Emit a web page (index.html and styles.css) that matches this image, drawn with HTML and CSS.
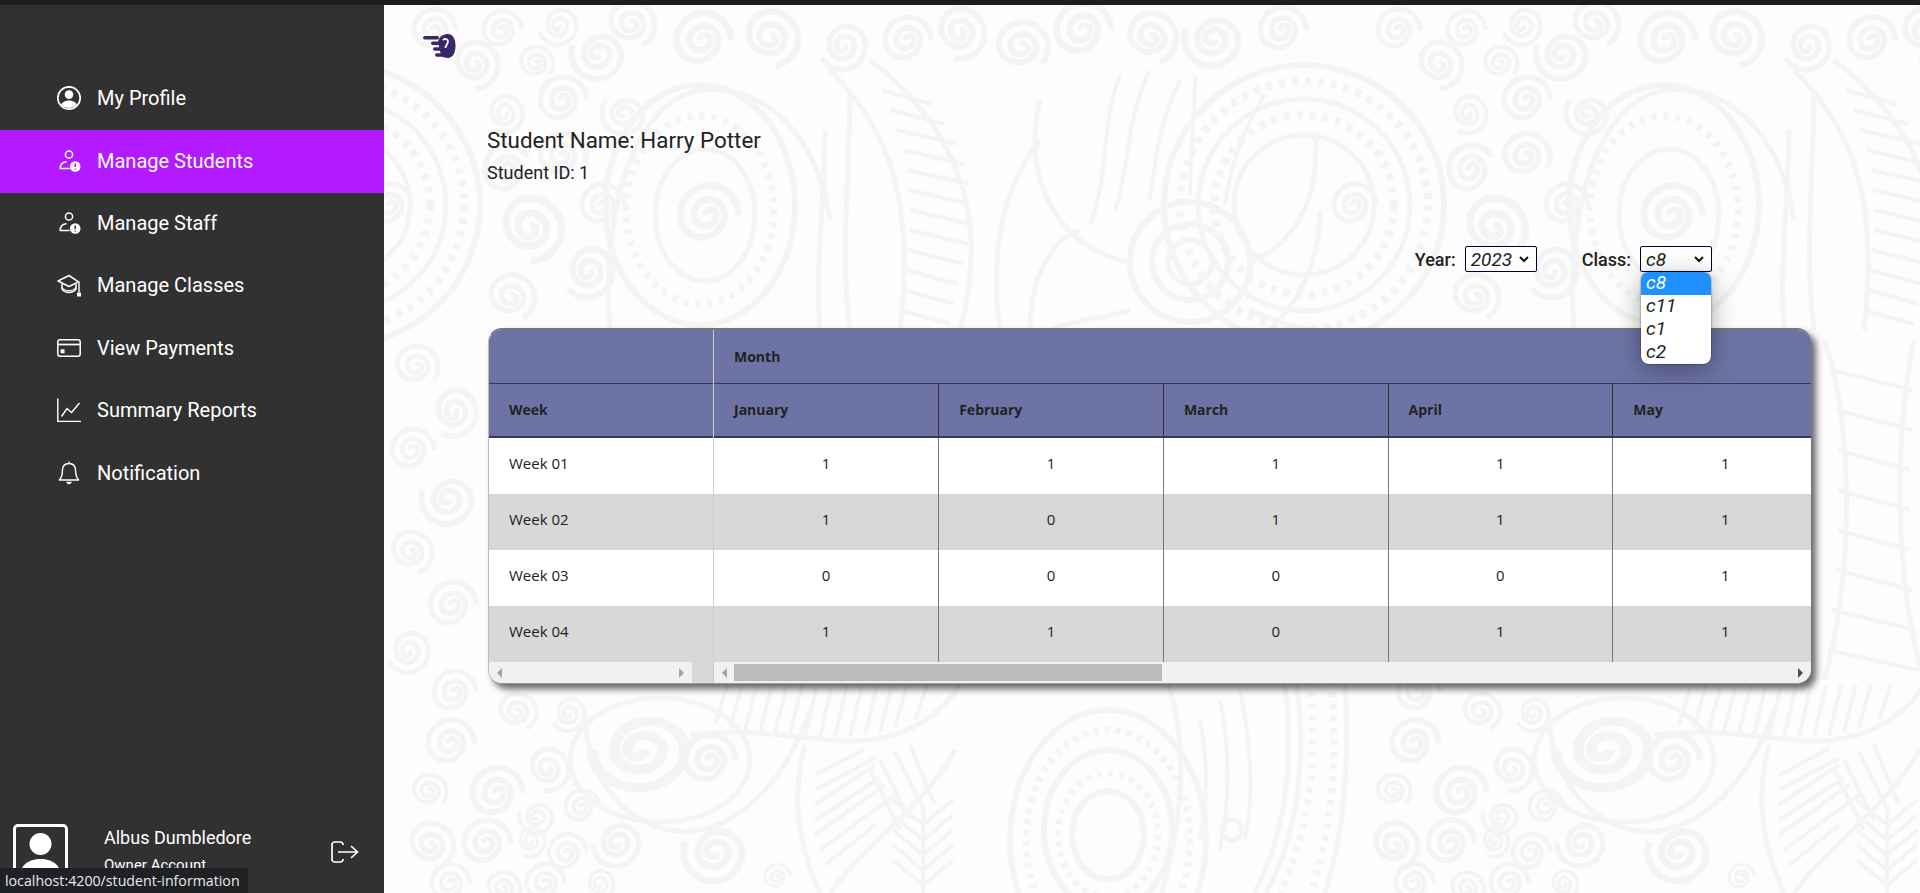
FILE: index.html
```html
<!DOCTYPE html>
<html lang="en">
<head>
    <meta charset="UTF-8">
    <meta name="viewport" content="width=device-width, initial-scale=1.0">
    <title>Student Information</title>
    <link rel="stylesheet" href="styles.css">
</head>
<body>
    <div class="top-strip"></div>

    <div class="app">
        <aside class="sidebar">
            <nav class="nav">
                <a class="nav-item" href="#">
                    <svg class="nav-icon" viewBox="0 0 24 24"><circle cx="12" cy="12" r="11.2" fill="none" stroke="#fff" stroke-width="1.7"/><circle cx="12" cy="8.6" r="4.3" fill="#fff"/><path d="M4 18.6c1.6-3 4.6-4.2 8-4.2s6.400 1.200 8 4.200a11 11 0 0 1-16 0z" fill="#fff"/></svg>
                    My Profile
                </a>
                <a class="nav-item active" href="#">
                    <svg class="nav-icon" viewBox="0 0 24 24"><circle cx="12" cy="5.500" r="3.600" fill="none" stroke="#fff" stroke-width="1.500"/><path d="M3.200 19.500c0-4 2.400-6.200 5.800-6.700M3.200 19.500h8.800" fill="none" stroke="#fff" stroke-width="1.500" stroke-linecap="round"/><circle cx="18.200" cy="17.500" r="5.300" fill="#fff"/><path d="M18.200 14.500v3.500M18.200 19.500v1" stroke="#b41aff" stroke-width="1.500"/></svg>
                    Manage Students
                </a>
                <a class="nav-item" href="#">
                    <svg class="nav-icon" viewBox="0 0 24 24"><circle cx="12" cy="5.500" r="3.600" fill="none" stroke="#fff" stroke-width="1.500"/><path d="M3.200 19.500c0-4 2.400-6.200 5.800-6.700M3.200 19.500h8.800" fill="none" stroke="#fff" stroke-width="1.500" stroke-linecap="round"/><circle cx="18.200" cy="17.500" r="5.300" fill="#fff"/><path d="M18.200 14.500v3.500M18.200 19.500v1" stroke="#313131" stroke-width="1.500"/></svg>
                    Manage Staff
                </a>
                <a class="nav-item" href="#">
                    <svg class="nav-icon" viewBox="0 0 24 24"><path d="M12 2.500 1 8l11 5.500L21.500 8.800z" fill="none" stroke="#fff" stroke-width="1.500" stroke-linejoin="round"/><path d="M5 11v5c2 2.600 4.500 3.500 7 3.500s5-.9 7-3.500v-5" fill="none" stroke="#fff" stroke-width="1.500"/><path d="M5 14.500c2 2.500 4.500 3.200 7 3.200s5-.7 7-3.200" fill="none" stroke="#fff" stroke-width="1.200"/><path d="M22 8.500v11" stroke="#fff" stroke-width="1.400"/><rect x="20" y="19.500" width="4" height="4" rx=".6" fill="#fff"/></svg>
                    Manage Classes
                </a>
                <a class="nav-item" href="#">
                    <svg class="nav-icon" viewBox="0 0 24 24"><rect x=".8" y="3.800" width="22.400" height="16.400" rx="2.200" fill="none" stroke="#fff" stroke-width="1.500"/><path d="M1 8.500h22" stroke="#fff" stroke-width="1.700"/><rect x="3.600" y="13.200" width="4" height="4" rx=".6" fill="#fff"/></svg>
                    View Payments
                </a>
                <a class="nav-item" href="#">
                    <svg class="nav-icon" viewBox="0 0 24 24"><path d="M.8 .5v23h23.200" fill="none" stroke="#fff" stroke-width="1.400"/><path d="M4.500 18.500 10 10.500l4.500 4 8-9.500" fill="none" stroke="#fff" stroke-width="1.400"/></svg>
                    Summary Reports
                </a>
                <a class="nav-item" href="#">
                    <svg class="nav-icon" viewBox="0 0 24 24"><path d="M12 2.500c-4.500 0-6.600 3.300-6.600 7.300 0 5-1.300 7.300-3.100 9.200h19.400c-1.800-1.900-3.100-4.200-3.100-9.200 0-4-2.100-7.300-6.600-7.300z" fill="none" stroke="#fff" stroke-width="1.400" stroke-linejoin="round"/><path d="M12 .5v2" stroke="#fff" stroke-width="1.400"/><path d="M9.200 20.700h5.600c-.3 1.500-1.400 2.500-2.800 2.500s-2.500-1-2.800-2.500z" fill="#fff"/></svg>
                    Notification
                </a>
            </nav>

            <div class="account">
                <div class="avatar">
                    <svg viewBox="0 0 48 60"><circle cx="24" cy="17" r="11" fill="#fff"/><path d="M3 52c0-14 9-20 21-20s21 6 21 20z" fill="#fff"/></svg>
                </div>
                <div class="account-text">
                    <div class="account-name">Albus Dumbledore</div>
                    <div class="account-role">Owner Account</div>
                </div>
                <svg class="logout" viewBox="0 0 28 22"><path d="M12 4V3.500A2.500 2.500 0 0 0 9.500 1H3.500A2.500 2.500 0 0 0 1 3.500v15A2.500 2.500 0 0 0 3.500 21h6a2.500 2.500 0 0 0 2.500-2.500V18" fill="none" stroke="#fff" stroke-width="1.700"/><path d="M7 11h19M20 5l6.500 6-6.500 6" fill="none" stroke="#fff" stroke-width="1.700"/></svg>
            </div>
        </aside>

        <main class="content">
            <!-- background paisley, drawn once and repeated one period (964px) to the right -->
            <svg class="paisley" width="1536" height="888" viewBox="384 5 1536 888">
                <defs>
                    <path id="curl" d="M0 0A4 4 0 0 1 8 0A8 8 0 0 1-8 0A11 11 0 0 1 14 0A16 16 0 0 1-18 0A21 21 0 0 1 24 0"/>
                    <g id="tile" fill="none" stroke="#f4f4f4" stroke-width="5">
                        <!-- top scroll field -->
                        <use href="#curl" transform="translate(432 30)"/>
                        <use href="#curl" transform="translate(500 30) scale(.9)"/>
                        <use href="#curl" transform="translate(475 62) rotate(90) scale(1.100)"/>
                        <use href="#curl" transform="translate(535 62) rotate(40) scale(.8)"/>
                        <use href="#curl" transform="translate(600 55) rotate(200) scale(1.200)"/>
                        <use href="#curl" transform="translate(560 100) scale(1.100)"/>
                        <use href="#curl" transform="translate(505 112) rotate(120) scale(.9)"/>
                        <use href="#curl" transform="translate(630 22) rotate(60) scale(1.100)"/>
                        <use href="#curl" transform="translate(560 25) rotate(160) scale(.9)"/>
                        <use href="#curl" transform="translate(700 40) scale(1.300)"/>
                        <use href="#curl" transform="translate(770 35) rotate(80) scale(1.300)"/>
                        <use href="#curl" transform="translate(845 45) rotate(150) scale(1.100)"/>
                        <use href="#curl" transform="translate(560 155) rotate(30) scale(1.100)"/>
                        <use href="#curl" transform="translate(625 115) rotate(220) scale(1)"/>
                        <use href="#curl" transform="translate(505 170) rotate(-30) scale(1.100)"/>
                        <use href="#curl" transform="translate(530 225) rotate(90) scale(1.500)"/>
                        <use href="#curl" transform="translate(600 205) scale(1)"/>
                        <use href="#curl" transform="translate(590 270) rotate(140) scale(1.200)"/>
                        <use href="#curl" transform="translate(510 295) rotate(60) scale(1.100)"/>
                        <use href="#curl" transform="translate(905 40) scale(1.100)"/>
                        <use href="#curl" transform="translate(960 30) rotate(100) scale(1.200)"/>
                        <use href="#curl" transform="translate(1020 45) rotate(40) scale(1.200)"/>
                        <use href="#curl" transform="translate(1080 30) scale(1.300)"/>
                        <use href="#curl" transform="translate(1150 35) rotate(70) scale(1.200)"/>
                        <use href="#curl" transform="translate(1215 40) rotate(200) scale(1.300)"/>
                        <use href="#curl" transform="translate(1280 30) scale(1.100)"/>
                        <!-- left round peacock -->
                        <circle cx="340" cy="205" r="140" stroke-width="6"/>
                        <circle cx="340" cy="205" r="124" stroke-width="8" stroke-dasharray="6 7"/>
                        <circle cx="340" cy="205" r="106" stroke-width="5"/>
                        <circle cx="340" cy="205" r="90" stroke-width="8" stroke-dasharray="6 7"/>
                        <circle cx="340" cy="205" r="70" stroke-width="5"/>
                        <use href="#curl" transform="translate(388 205) scale(1)"/>
                        <!-- centre teardrop -->
                        <ellipse cx="700" cy="205" rx="95" ry="120" stroke-width="6"/>
                        <ellipse cx="700" cy="210" rx="74" ry="94" stroke-width="7" stroke-dasharray="5 7"/>
                        <ellipse cx="705" cy="215" rx="50" ry="66"/>
                        <use href="#curl" transform="translate(705 215) scale(1.400)"/>
                        <path d="M610 330C600 200 640 80 720 90c60 5 100 60 110 130" stroke-width="5"/>
                        <!-- long feather at top -->
                        <path d="M830 70C890 130 915 200 900 330" stroke-width="5"/>
                        <path d="M870 60C960 130 990 220 960 330" stroke-width="5"/>
                        <path d="M882 90l50 14M890 110l55 14M897 130l60 14M903 150l60 14M907 170l62 14M909 190l60 14M910 210l60 14M910 230l58 14M908 250l55 14M906 270l52 14M904 290l50 14M900 310l50 14" stroke-width="4"/>
                        <path d="M850 90C850 160 840 260 850 330M825 130C825 200 815 260 820 330" stroke-width="5"/>
                        <!-- flower circle -->
                        <circle cx="1190" cy="262" r="60" stroke-width="6"/>
                        <circle cx="1190" cy="262" r="38" stroke-width="6"/>
                        <circle cx="1190" cy="262" r="22" stroke-width="5"/>
                        <path d="M1130 262C1060 250 1020 180 1040 100M1250 262c50-20 70-70 65-130" stroke-width="5"/>
                        <path d="M1090 225c20-50 10-100 30-150M1115 210c15-40 10-90 35-140M1150 200c5-40 10-80 30-120M1190 195c0-40 5-80 5-120M1225 205c5-40 20-80 40-110" stroke-width="4"/>
                        <path d="M1000 330c-10-70 0-140 40-190M1270 330c30-30 50-70 50-120M1030 330c0-50 20-90 50-100M1130 310c-30 10-60 10-80 20M1250 310c20 10 40 15 60 20" stroke-width="5"/>
                        <!-- left and right of the table -->
                        <use href="#curl" transform="translate(415 365) rotate(40) scale(1)"/>
                        <use href="#curl" transform="translate(455 410) rotate(120) scale(1.100)"/>
                        <use href="#curl" transform="translate(410 450) scale(1)"/>
                        <use href="#curl" transform="translate(450 500) rotate(200) scale(1.200)"/>
                        <use href="#curl" transform="translate(410 550) rotate(70) scale(1)"/>
                        <use href="#curl" transform="translate(450 605) scale(1.100)"/>
                        <use href="#curl" transform="translate(410 650) rotate(150) scale(1)"/>
                        <path d="M860 340c30 80 30 240 0 340M950 340c-20 100-20 240 10 340" stroke-width="5"/>
                        <path d="M868 370l80 20M872 410l76 20M874 450l72 20M874 490l72 20M874 530l72 20M872 570l76 20M868 610l84 20M864 650l90 20" stroke-width="4"/>

                        <!-- bottom scroll field -->
                        <use href="#curl" transform="translate(448 743) scale(1.100)"/>
                        <use href="#curl" transform="translate(516 710) rotate(60) scale(.9)"/>
                        <use href="#curl" transform="translate(570 713) rotate(150) scale(.8)"/>
                        <use href="#curl" transform="translate(452 692)"/>
                        <use href="#curl" transform="translate(548 767) rotate(100)"/>
                        <use href="#curl" transform="translate(494 793) scale(1.200)"/>
                        <use href="#curl" transform="translate(428 790) rotate(40) scale(.8)"/>
                        <use href="#curl" transform="translate(538 817) rotate(200) scale(.8)"/>
                        <use href="#curl" transform="translate(580 807) scale(.8)"/>
                        <use href="#curl" transform="translate(430 843) rotate(80) scale(1.100)"/>
                        <use href="#curl" transform="translate(484 843) scale(1.100)"/>
                        <use href="#curl" transform="translate(531 840) rotate(120) scale(.7)"/>
                        <use href="#curl" transform="translate(565 853) scale(.9)"/>
                        <use href="#curl" transform="translate(619 843) rotate(180) scale(1.100)"/>
                        <use href="#curl" transform="translate(448 883) scale(.9)"/>
                        <use href="#curl" transform="translate(502 887) rotate(60) scale(.8)"/>
                        <use href="#curl" transform="translate(543 883) scale(.9)"/>
                        <use href="#curl" transform="translate(600 883) rotate(120) scale(.7)"/>
                        <use href="#curl" transform="translate(717 853) rotate(200) scale(1.400)"/>
                        <use href="#curl" transform="translate(707 760) scale(1.200)"/>
                        <use href="#curl" transform="translate(776 877) scale(.6)"/>
                        <!-- big curl -->
                        <use href="#curl" transform="translate(645 750) rotate(180) scale(2.200 1.800)"/>
                        <ellipse cx="660" cy="760" rx="90" ry="62" stroke-width="5"/>
                        <path d="M585 720C590 800 650 840 700 830c50-10 90-60 110-120" stroke-width="5"/>
                        <!-- upper feather band -->
                        <path d="M690 735c70-10 130 10 180 5 40-5 70-25 90-55" stroke-width="5"/>
                        <path d="M715 725l12-40M730 728l12-43M745 730l12-45M760 731l12-46M775 732l12-47M790 735l12-50M805 736l12-50M820 737l12-52M835 737l12-52M850 736l12-50M865 735l12-50M880 732l12-47M895 727l12-42M915 720l12-35" stroke-width="4"/>
                        <!-- lower feathers -->
                        <path d="M805 745C790 800 800 850 820 893M955 750C930 800 860 850 830 893" stroke-width="5"/>
                        <path d="M815 775l50-26M815 790l60-32M815 805l60-40M815 820l65-42M815 835l70-50M820 850l75-55M825 865l50-40M870 770l30 60M880 760l30 60M895 752l30 60M910 745l25 60" stroke-width="4"/>
                        <path d="M923 805v88" stroke-width="4"/>
                        <path d="M923 825l-30-25M923 840l-30-25M923 855l-30-25M923 870l-30-25M923 885l-30-25M923 825l30-25M923 840l30-25M923 855l30-25M923 870l30-25M923 885l30-25" stroke-width="4"/>
                        <!-- lower peacock -->
                        <ellipse cx="1108" cy="835" rx="36" ry="44" stroke-width="6"/>
                        <ellipse cx="1108" cy="835" rx="50" ry="62" stroke-width="6" stroke-dasharray="5 6"/>
                        <ellipse cx="1108" cy="830" rx="64" ry="80" stroke-width="6"/>
                        <ellipse cx="1108" cy="840" rx="82" ry="110" stroke-width="7" stroke-dasharray="5 6"/>
                        <ellipse cx="1108" cy="840" rx="98" ry="130" stroke-width="6"/>
                        <path d="M1167 680c18 50 20 120-5 213M1284 680c10 70 5 150-30 213M1296 680c10 70 5 150-30 213" stroke-width="5"/>
                        <path d="M1310 680c8 70 0 150-30 213M1331 680c8 80 0 150-20 213" stroke-width="7" stroke-dasharray="5 7"/>
                        <path d="M1345 680c5 80 0 150-20 213" stroke-width="5"/>
                        <path d="M1220 700c10 50 10 100 0 150M1240 690c10 50 15 100 5 150M1200 720c8 40 8 80 0 120" stroke-width="4"/>
                        <circle cx="1232" cy="830" r="10"/>
                    </g>
                </defs>
                <use href="#tile"/>
                <use href="#tile" x="964"/>
            </svg>

            <div class="logo">
                <svg viewBox="0 0 34 26" width="34" height="26">
                    <path d="M16 9C17 3 22 1 26 1c5 0 7.500 5 7.500 12s-3 12-7.500 12c-3 0-6-1-7-3z" fill="#3a2766"/>
                    <rect x="1" y="3" width="16" height="3.600" rx="1.800" fill="#3a2766"/>
                    <rect x="9" y="8.500" width="9" height="3.400" rx="1.700" fill="#3a2766"/>
                    <rect x="11" y="14.200" width="10" height="3.600" rx="1.800" fill="#3a2766"/>
                    <rect x="13" y="20.200" width="10" height="3.600" rx="1.800" fill="#3a2766"/>
                    <path d="M21 7c2-2 5-1 5 1.500S23.500 12 23.500 15" fill="none" stroke="#fdfdfd" stroke-width="1.800"/>
                </svg>
            </div>

            <div class="student">
                <h1>Student Name: Harry Potter</h1>
                <p>Student ID: 1</p>
            </div>

            <div class="filters">
                <label class="filter year">Year:
                    <select><option>2023</option></select>
                </label>
                <div class="filter">
                    <label for="classSelect">Class:</label>
                    <div class="select-wrap">
                        <select id="classSelect" class="class-select">
                            <option>c8</option><option>c11</option><option>c1</option><option>c2</option>
                        </select>
                        <ul class="options">
                            <li class="selected">c8</li>
                            <li>c11</li>
                            <li>c1</li>
                            <li>c2</li>
                        </ul>
                    </div>
                </div>
            </div>

            <div class="table-card">
                <div class="fixed-pane">
                    <table class="attendance">
                        <thead>
                            <tr class="head-top"><th></th></tr>
                            <tr class="head-sub"><th>Week</th></tr>
                        </thead>
                        <tbody>
                            <tr><td>Week 01</td></tr>
                            <tr><td>Week 02</td></tr>
                            <tr><td>Week 03</td></tr>
                            <tr><td>Week 04</td></tr>
                        </tbody>
                    </table>
                    <div class="scrollbar left-bar">
                        <div class="track">
                            <span class="arrow arrow-left light"></span>
                            <span class="arrow arrow-right light"></span>
                        </div>
                    </div>
                </div>
                <div class="scroll-pane">
                    <table class="attendance months">
                        <thead>
                            <tr class="head-top"><th colspan="5">Month</th></tr>
                            <tr class="head-sub"><th>January</th><th>February</th><th>March</th><th>April</th><th>May</th></tr>
                        </thead>
                        <tbody>
                            <tr><td>1</td><td>1</td><td>1</td><td>1</td><td>1</td></tr>
                            <tr><td>1</td><td>0</td><td>1</td><td>1</td><td>1</td></tr>
                            <tr><td>0</td><td>0</td><td>0</td><td>0</td><td>1</td></tr>
                            <tr><td>1</td><td>1</td><td>0</td><td>1</td><td>1</td></tr>
                        </tbody>
                    </table>
                    <div class="scrollbar right-bar">
                        <span class="arrow arrow-left light"></span>
                        <div class="thumb"></div>
                        <span class="arrow arrow-right"></span>
                    </div>
                </div>
            </div>
        </main>
    </div>

    <div class="status-bubble">localhost:4200/student-information</div>
</body>
</html>
```

FILE: styles.css
```css
* {
    box-sizing: border-box;
}
html, body {
    height: 100%;
}
body {
    margin: 0;
    overflow: hidden;
    font-family: Roboto, Arial, sans-serif;
    color: #222;
    display: flex;
    flex-direction: column;
}
.top-strip {
    height: 5px;
    background-color: #1c1c22;
    flex: none;
}
.app {
    flex: 1;
    display: flex;
    min-height: 0;
}

/* Sidebar */
.sidebar {
    width: 384px;
    flex: none;
    background-color: #313131;
    display: flex;
    flex-direction: column;
    overflow: hidden;
}
.nav {
    padding-top: 63px;
}
.nav-item {
    height: 62.4px;
    padding: 0 0 2px 57px;
    display: flex;
    align-items: center;
    gap: 16px;
    color: #fff;
    font-size: 20px;
    font-weight: 400;
    text-decoration: none;
}
.nav-item.active {
    background-color: #b41aff;
}
.nav-icon {
    width: 24px;
    height: 24px;
    flex: none;
}
.account {
    margin-top: auto;
    height: 69px;
    padding-left: 13px;
    display: flex;
    align-items: flex-start;
    color: #fff;
}
.avatar {
    width: 55px;
    height: 66px;
    border: 3px solid #fff;
    border-radius: 5px;
}
.avatar svg {
    display: block;
    width: 100%;
    height: 100%;
}
.account-text {
    margin-left: 36px;
    width: 201px;
}
.account-name {
    margin-top: 2px;
    font-size: 18px;
    font-weight: 400;
    line-height: 24px;
}
.account-role {
    margin-top: 5px;
    font-size: 15px;
    font-weight: 400;
    line-height: 20px;
}
.logout {
    width: 28px;
    height: 22px;
    margin-top: 17px;
    margin-left: 26px;
}

/* Main area */
.content {
    flex: 1;
    position: relative;
    overflow: hidden;
    background-color: #fdfdfd;
    padding: 28px 0 0 104px;
}
.paisley {
    position: absolute;
    left: 0;
    top: 0;
}
.logo, .student, .filters, .table-card {
    position: relative;
}
.logo {
    margin-left: -66px;
    height: 26px;
}
.logo svg {
    display: block;
}
.student {
    margin-top: 68px;
    margin-left: -1px;
}
.student h1 {
    margin: 0;
    font-size: 22.4px;
    font-weight: 400;
    line-height: 26px;
}
.student p {
    margin: 8px 0 0;
    font-size: 18px;
    line-height: 24px;
}

.filters {
    margin-top: 61px;
    width: 1224px;
    height: 26px;
    display: flex;
    justify-content: flex-end;
    gap: 45px;
    z-index: 2;
    font-size: 18px;
    font-weight: 500;
}
.filter {
    display: flex;
    align-items: center;
    gap: 9px;
}
.filter select {
    appearance: none;
    height: 26px;
    width: 72px;
    padding: 0 0 0 5px;
    border: 1px solid #003;
    border-radius: 2px;
    background: #fff url("data:image/svg+xml,%3Csvg xmlns='http://www.w3.org/2000/svg' width='10' height='7'%3E%3Cpath d='M1 1l4 4 4-4' fill='none' stroke='%23111' stroke-width='2'/%3E%3C/svg%3E") no-repeat right 7px center;
    color: #222;
    font-family: Roboto, Arial, sans-serif;
    font-size: 19px;
    font-style: italic;
}
.select-wrap {
    position: relative;
}
.options {
    position: absolute;
    left: 1px;
    top: 26px;
    width: 70px;
    margin: 0;
    padding: 0;
    list-style: none;
    background-color: #fff;
    border-radius: 8px;
    overflow: hidden;
    box-shadow: 0 6px 26px rgba(0, 0, 0, 0.35), 0 0 2px rgba(0, 0, 0, 0.6);
    font-size: 19px;
    font-weight: 400;
    font-style: italic;
}
.options li {
    height: 23px;
    line-height: 21px;
    padding-left: 5px;
}
.options li.selected {
    background-color: #1e90ff;
    color: #fff;
}

/* Table */
.table-card {
    margin-top: 56px;
    width: 1323px;
    height: 356px;
    display: flex;
    background-color: #f1f1f1;
    border-top: 2px solid #777;
    border-left: 1px solid #bbb;
    border-bottom: 1px solid #999;
    border-radius: 14px;
    overflow: hidden;
    box-shadow: 5px 5px 7px rgba(0, 0, 0, 0.6);
}
.fixed-pane {
    width: 225px;
    flex: none;
    border-right: 1px solid #ccc;
    display: flex;
    flex-direction: column;
}
.scroll-pane {
    flex: 1;
    min-width: 0;
    overflow: hidden;
    display: flex;
    flex-direction: column;
}
.attendance {
    border-collapse: collapse;
    table-layout: fixed;
    width: 100%;
    font-family: "Open Sans", "Noto Sans", Arial, sans-serif;
    font-size: 15px;
    color: #222;
}
.months {
    width: 1123.5px;
}
.attendance th {
    background-color: #6d74a5;
    text-align: left;
    padding: 0 0 0 20px;
    font-size: 14px;
    font-weight: 700;
}
.head-top th {
    height: 53px;
    border-bottom: 1px solid #33385f;
}
.head-sub th {
    height: 54px;
    border-bottom: 2px solid #33385f;
}
.months th + th, .months td + td {
    border-left: 1px solid #333;
}
.months td + td {
    border-left-color: #777;
}
.attendance td {
    height: 56px;
    padding: 0 0 6px;
    background-color: #fff;
}
.attendance tbody tr:first-child td {
    height: 57px;
}
.attendance tbody tr:nth-child(even) td {
    background-color: #d8d8d8;
}
.fixed-pane td {
    padding-left: 20px;
}
.months td {
    text-align: center;
}

/* Scrollbars are painted, the table never really scrolls here */
.scrollbar {
    flex: 1;
    display: flex;
    align-items: center;
}
.left-bar {
    background-color: #d8d8d8;
}
.left-bar .track {
    width: 203px;
    height: 100%;
    background-color: #f1f1f1;
    display: flex;
    align-items: center;
    justify-content: space-between;
    padding: 0 8px;
}
.right-bar {
    padding: 0 8px;
}
.thumb {
    width: 428px;
    height: 17px;
    margin-left: 7px;
    background-color: #bcbcbc;
}
.arrow {
    width: 0;
    height: 0;
    border-top: 5px solid transparent;
    border-bottom: 5px solid transparent;
}
.arrow-left {
    border-right: 5px solid #505050;
}
.arrow-right {
    border-left: 5px solid #505050;
    margin-left: auto;
}
.arrow-left.light {
    border-right-color: #a3a3a3;
}
.arrow-right.light {
    border-left-color: #a3a3a3;
}

.status-bubble {
    position: absolute;
    left: 0;
    bottom: 0;
    height: 25px;
    padding: 0 8px 0 5px;
    background-color: #202124;
    border-top-right-radius: 4px;
    color: #e8eaed;
    font-family: "Open Sans", "Noto Sans", Arial, sans-serif;
    font-size: 14.2px;
    line-height: 25px;
    white-space: nowrap;
}
```
